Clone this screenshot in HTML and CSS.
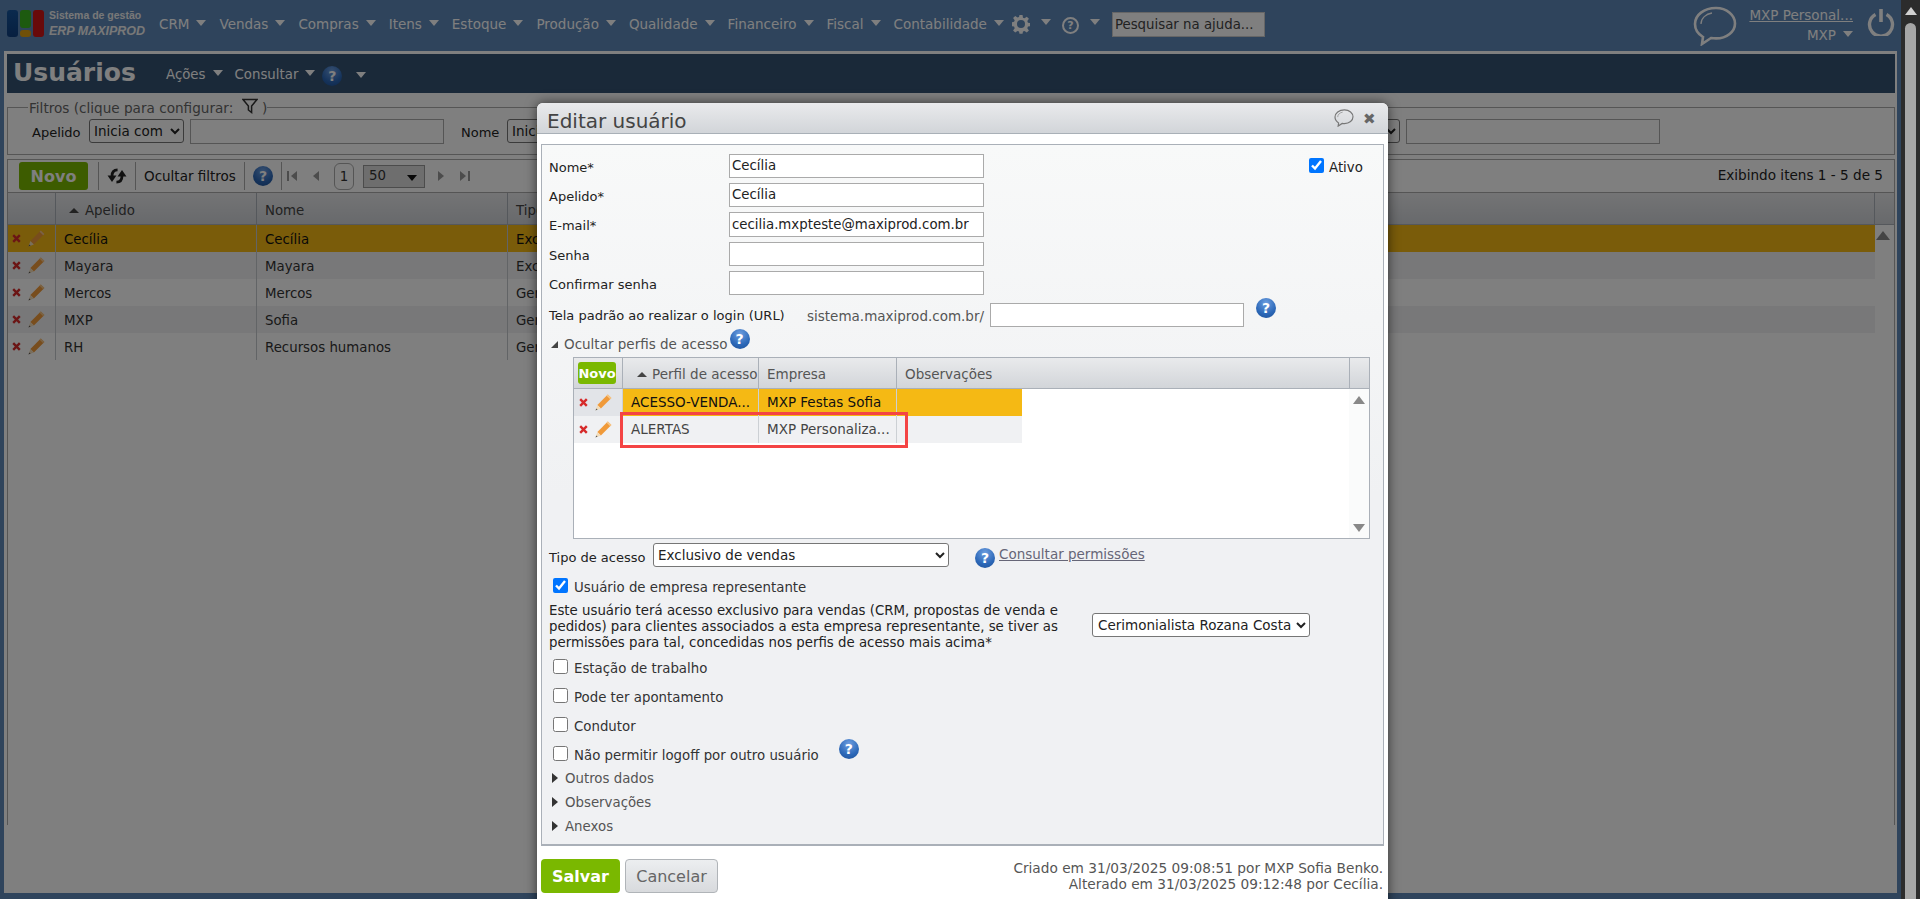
FILE: index.html
```html
<!DOCTYPE html>
<html lang="pt-BR">
<head>
<meta charset="utf-8">
<title>Usuários</title>
<link rel="stylesheet" href="styles.css">
</head>
<body>
<svg class="sprite" aria-hidden="true">
  <symbol id="i-pencil" viewBox="0 0 17 17">
    <path d="M12.8.6 16.400 4.100 5.900 14.400 2.400 10.900Z" fill="#f09a3a"/>
    <path d="M12.800.6 16.400 4.100 15.200 5.300 11.600 1.800Z" fill="#f6c88c"/>
    <path d="M2.400 10.900 5.900 14.400.5 16.500Z" fill="#f3dcb8"/>
    <path d="M1.300 14.400 2.600 15.500.5 16.500Z" fill="#555"/>
  </symbol>
  <symbol id="i-x" viewBox="0 0 9 9">
    <path d="M1.200 1.200 7.800 7.800M7.800 1.200 1.200 7.800" stroke="#d62a2a" stroke-width="2.400" fill="none"/>
  </symbol>
  <symbol id="i-bubble" viewBox="0 0 44 40">
    <path d="M23 2C11 2 2 9 2 18c0 6 3 10 8 13l-1 7 9-6c2 .3 3 .4 5 .4 11 0 19-7 19-15S34 2 23 2Z" fill="none" stroke="currentColor" stroke-width="2.600"/>
    <path d="M8 18c0-6 5-10 11-11" fill="none" stroke="currentColor" stroke-width="1.300"/>
  </symbol>
  <symbol id="i-gear" viewBox="0 0 20 20">
    <path d="M8.300 0h3.400l.5 3 1.700.7 2.500-1.800 2.400 2.400-1.800 2.500.7 1.700 2.300.5v3.400l-2.300.5-.7 1.700 1.800 2.500-2.400 2.400-2.500-1.800-1.700.7-.5 2.500H8.300l-.5-2.500-1.700-.7-2.500 1.800-2.400-2.400 1.800-2.500-.7-1.700-2.300-.5V8.100l2.300-.5.7-1.700-1.800-2.500 2.400-2.400 2.500 1.800 1.700-.7Z" transform="translate(1 1) scale(.9)" fill="#fff"/>
    <circle cx="10" cy="10" r="4" fill="#5e88b8"/>
  </symbol>
  <symbol id="i-power" viewBox="0 0 28 28">
    <path d="M8.500 6.500a11.500 11.500 0 1 0 11 0" fill="none" stroke="currentColor" stroke-width="3.400"/>
    <path d="M14 1v13" fill="none" stroke="currentColor" stroke-width="3.600"/>
  </symbol>
  <symbol id="i-funnel" viewBox="0 0 16 16">
    <path d="M1 1.500h14L9.600 8v6.500L6.400 12V8Z" fill="none" stroke="currentColor" stroke-width="1.500"/>
  </symbol>
  <symbol id="i-refresh" viewBox="0 0 18 16">
    <path d="M9.500 2.500C5.500 2.500 4.500 5 4.500 8" fill="none" stroke="currentColor" stroke-width="2.500"/>
    <path d="M.5 7.500H8.500L4.500 13.500Z" fill="currentColor"/>
    <path d="M8.500 13.500C12.500 13.500 13.500 11 13.500 8" fill="none" stroke="currentColor" stroke-width="2.500"/>
    <path d="M9.500 8.500H17.500L13.500 2.500Z" fill="currentColor"/>
  </symbol>
</svg>

<div class="app">
  <div class="page">
    <header class="topbar">
      <div class="logo">
        <div class="logo-marks">
          <span class="mark mark-blue"></span>
          <span class="mark-stack"><span class="mark mark-green"></span><span class="mark mark-orange"></span></span>
          <span class="mark mark-red"></span>
        </div>
        <div class="logo-text"><span class="logo-small">Sistema de gestão</span><span class="logo-big">ERP MAXIPROD</span></div>
      </div>
      <nav class="nav">
        <span class="nav-item">CRM<i class="caret"></i></span>
        <span class="nav-item">Vendas<i class="caret"></i></span>
        <span class="nav-item">Compras<i class="caret"></i></span>
        <span class="nav-item">Itens<i class="caret"></i></span>
        <span class="nav-item">Estoque<i class="caret"></i></span>
        <span class="nav-item">Produção<i class="caret"></i></span>
        <span class="nav-item">Qualidade<i class="caret"></i></span>
        <span class="nav-item">Financeiro<i class="caret"></i></span>
        <span class="nav-item">Fiscal<i class="caret"></i></span>
        <span class="nav-item nav-last">Contabilidade<i class="caret"></i></span>
      </nav>
      <svg class="gear"><use href="#i-gear"/></svg><i class="caret caret-gear"></i>
      <span class="help-outline">?</span><i class="caret caret-help"></i>
      <input class="search" type="text" placeholder="Pesquisar na ajuda...">
      <svg class="top-bubble"><use href="#i-bubble"/></svg>
      <div class="account">
        <a class="account-name">MXP Personal...</a>
        <span class="account-user">MXP<i class="caret caret-user"></i></span>
      </div>
      <svg class="power"><use href="#i-power"/></svg>
    </header>

    <main class="panel">
      <div class="titlebar">
        <h1 class="page-title">Usuários</h1>
        <span class="title-menu title-acoes">Ações<i class="caret"></i></span>
        <span class="title-menu title-consultar">Consultar<i class="caret"></i></span>
        <span class="help help-title">?</span><i class="caret caret-title"></i>
      </div>

      <fieldset class="filters">
        <legend class="filters-legend">Filtros (clique para configurar: <svg class="funnel"><use href="#i-funnel"/></svg> )</legend>
        <div class="filter-row">
          <label class="filter-label">Apelido</label>
          <select class="filter-select"><option>Inicia com</option></select>
          <input class="filter-input" type="text">
          <label class="filter-label filter-next">Nome</label>
          <select class="filter-select"><option>Inicia com</option></select>
          <input class="filter-input" type="text">
          <select class="filter-select filter-end"><option>Inicia com</option></select>
          <input class="filter-input" type="text">
        </div>
      </fieldset>

      <section class="listing">
        <div class="toolbar">
          <button class="btn-novo" type="button">Novo</button>
          <span class="tool tool-refresh"><svg class="refresh"><use href="#i-refresh"/></svg></span>
          <span class="tool tool-text">Ocultar filtros</span>
          <span class="tool tool-help"><span class="help">?</span></span>
          <i class="pg pg-first"></i><i class="pg pg-prev"></i>
          <span class="pg-page">1</span>
          <span class="pg-size">50<i class="caret caret-dark"></i></span>
          <i class="pg pg-next"></i><i class="pg pg-last"></i>
          <span class="tool-count">Exibindo itens 1 - 5 de 5</span>
        </div>
        <div class="grid-head">
          <span class="gh gh-actions"></span>
          <span class="gh gh-apelido"><i class="sort"></i>Apelido</span>
          <span class="gh gh-nome">Nome</span>
          <span class="gh gh-tipo">Tipo</span>
          <span class="gh gh-scroll"></span>
        </div>
        <div class="grid-body">
          <div class="grow grow-selected"><span class="gc gc-actions"><svg class="ic-x"><use href="#i-x"/></svg><svg class="ic-pencil"><use href="#i-pencil"/></svg></span><span class="gc gc-apelido">Cecília</span><span class="gc gc-nome">Cecília</span><span class="gc gc-tipo">Exclusivo</span></div>
          <div class="grow grow-alt"><span class="gc gc-actions"><svg class="ic-x"><use href="#i-x"/></svg><svg class="ic-pencil"><use href="#i-pencil"/></svg></span><span class="gc gc-apelido">Mayara</span><span class="gc gc-nome">Mayara</span><span class="gc gc-tipo">Exclusivo</span></div>
          <div class="grow"><span class="gc gc-actions"><svg class="ic-x"><use href="#i-x"/></svg><svg class="ic-pencil"><use href="#i-pencil"/></svg></span><span class="gc gc-apelido">Mercos</span><span class="gc gc-nome">Mercos</span><span class="gc gc-tipo">Geral</span></div>
          <div class="grow grow-alt"><span class="gc gc-actions"><svg class="ic-x"><use href="#i-x"/></svg><svg class="ic-pencil"><use href="#i-pencil"/></svg></span><span class="gc gc-apelido">MXP</span><span class="gc gc-nome">Sofia</span><span class="gc gc-tipo">Geral</span></div>
          <div class="grow"><span class="gc gc-actions"><svg class="ic-x"><use href="#i-x"/></svg><svg class="ic-pencil"><use href="#i-pencil"/></svg></span><span class="gc gc-apelido">RH</span><span class="gc gc-nome">Recursos humanos</span><span class="gc gc-tipo">Geral</span></div>
          <i class="scroll-up scroll-up-page"></i>
        </div>
      </section>
    </main>
    <div class="overlay"></div>
  </div>

  <aside class="scrollbar"><i class="scrollbar-arrow"></i><div class="scrollbar-thumb"></div></aside>

  <div class="modal">
    <div class="modal-head">
      <span class="modal-title">Editar usuário</span>
      <svg class="modal-bubble"><use href="#i-bubble"/></svg>
      <span class="modal-close">✖</span>
    </div>
    <form class="modal-panel">
      <div class="form-row">
        <label class="form-label">Nome*</label><input class="form-input" type="text" value="Cecília">
        <label class="check check-ativo"><input class="check-box" type="checkbox" checked>Ativo</label>
      </div>
      <div class="form-row"><label class="form-label">Apelido*</label><input class="form-input" type="text" value="Cecília"></div>
      <div class="form-row"><label class="form-label">E-mail*</label><input class="form-input form-input-tall" type="text" value="cecilia.mxpteste@maxiprod.com.br"></div>
      <div class="form-row"><label class="form-label">Senha</label><input class="form-input" type="text"></div>
      <div class="form-row"><label class="form-label">Confirmar senha</label><input class="form-input" type="text"></div>
      <div class="url-row">
        <label class="url-label">Tela padrão ao realizar o login (URL)</label>
        <span class="url-host">sistema.maxiprod.com.br/</span>
        <input class="url-input" type="text">
        <span class="help help-url">?</span>
      </div>
      <div class="section-toggle section-open"><i class="tri-open"></i><span>Ocultar perfis de acesso</span><span class="help help-toggle">?</span></div>

      <div class="subgrid">
        <div class="sg-head">
          <span class="sg-h sg-actions"><button class="btn-novo-small" type="button">Novo</button></span>
          <span class="sg-h sg-perfil"><i class="sort"></i>Perfil de acesso</span>
          <span class="sg-h sg-empresa">Empresa</span>
          <span class="sg-h sg-obs">Observações</span>
          <span class="sg-h sg-scroll"></span>
        </div>
        <div class="sg-body">
          <div class="sg-row sg-row-selected"><span class="sg-c sg-actions"><svg class="ic-x"><use href="#i-x"/></svg><svg class="ic-pencil"><use href="#i-pencil"/></svg></span><span class="sg-c sg-perfil">ACESSO-VENDA...</span><span class="sg-c sg-empresa">MXP Festas Sofia</span><span class="sg-c sg-obs-cell"></span></div>
          <div class="sg-row sg-row-alt"><span class="sg-c sg-actions"><svg class="ic-x"><use href="#i-x"/></svg><svg class="ic-pencil"><use href="#i-pencil"/></svg></span><span class="sg-c sg-perfil">ALERTAS</span><span class="sg-c sg-empresa">MXP Personaliza...</span><span class="sg-c sg-obs-cell"></span></div>
          <div class="sg-scrollcol"><i class="scroll-up"></i><i class="scroll-down"></i></div>
        </div>
        <div class="highlight"></div>
      </div>

      <div class="tipo-row">
        <label class="tipo-label">Tipo de acesso</label>
        <select class="tipo-select"><option>Exclusivo de vendas</option></select>
        <span class="help help-tipo">?</span>
        <a class="tipo-link">Consultar permissões</a>
      </div>
      <label class="check check-rep"><input class="check-box" type="checkbox" checked>Usuário de empresa representante</label>
      <div class="rep-row">
        <p class="rep-text">Este usuário terá acesso exclusivo para vendas (CRM, propostas de venda e<br>pedidos) para clientes associados a esta empresa representante, se tiver as<br>permissões para tal, concedidas nos perfis de acesso mais acima*</p>
        <select class="rep-select"><option>Cerimonialista Rozana Costa</option></select>
      </div>
      <label class="check check-opt"><input class="check-box" type="checkbox">Estação de trabalho</label>
      <label class="check check-opt"><input class="check-box" type="checkbox">Pode ter apontamento</label>
      <label class="check check-opt"><input class="check-box" type="checkbox">Condutor</label>
      <label class="check check-opt check-logoff"><input class="check-box" type="checkbox">Não permitir logoff por outro usuário<span class="help help-logoff">?</span></label>
      <div class="section-toggle section-closed section-first"><i class="tri-closed"></i><span>Outros dados</span></div>
      <div class="section-toggle section-closed"><i class="tri-closed"></i><span>Observações</span></div>
      <div class="section-toggle section-closed"><i class="tri-closed"></i><span>Anexos</span></div>
    </form>
    <div class="modal-foot">
      <button class="btn-save" type="button">Salvar</button>
      <button class="btn-cancel" type="button">Cancelar</button>
      <p class="audit">Criado em 31/03/2025 09:08:51 por MXP Sofia Benko.<br>Alterado em 31/03/2025 09:12:48 por Cecília.</p>
    </div>
  </div>
</div>
</body>
</html>
```

FILE: styles.css
```css
* { box-sizing: border-box; }
html, body { margin: 0; height: 899px; overflow: hidden; }
body { font-family: "DejaVu Sans", Verdana, sans-serif; font-size: 13.33px; color: #222; background: #fff; }
.sprite { display: none; }
.app { display: flex; height: 899px; width: 1920px; position: relative; overflow: hidden; }
.page { width: 1901px; height: 899px; background: #5e88b8; position: relative; flex: none; }
.overlay { position: absolute; inset: 0; background: rgba(0,0,0,.5); }

/* scrollbar */
.scrollbar { width: 19px; height: 899px; background: #2c2c2c; position: relative; flex: none; display: flex; flex-direction: column; align-items: center; padding-top: 7px; }
.scrollbar-arrow { width: 0; height: 0; border: 6px solid transparent; border-top: 0; border-bottom: 8px solid #d0d0d0; }
.scrollbar-thumb { width: 11px; margin-top: 8px; flex: 1; background: #a6a6a6; border-radius: 6px 6px 0 0; }

/* carets */
.caret { display: inline-block; width: 0; height: 0; border-left: 5px solid transparent; border-right: 5px solid transparent; border-top: 6px solid #fff; margin-left: 7px; vertical-align: 3px; }

/* top bar */
.topbar { height: 51px; display: flex; align-items: flex-start; padding-left: 7px; color: #fff; }
.logo { display: flex; gap: 5px; padding-top: 10px; width: 152px; flex: none; }
.logo-marks { display: flex; gap: 2px; height: 27px; }
.mark { display: block; width: 11px; border-radius: 3px; }
.mark-blue { background: linear-gradient(#14549c,#0f3f80); height: 27px; }
.mark-red { background: #d01414; height: 27px; }
.mark-stack { display: flex; flex-direction: column; gap: 2px; }
.mark-green { background: #3ab420; height: 18px; }
.mark-orange { background: #e0a010; height: 7px; }
.logo-text { display: flex; flex-direction: column; font-family: "Liberation Sans", Arial, sans-serif; font-weight: 700; color: #f0f0f0; margin-top: -2px; }
.logo-small { font-size: 10.500px; line-height: 15px; white-space: nowrap; }
.logo-big { font-size: 12.500px; line-height: 16px; font-style: italic; white-space: nowrap; }
.nav { display: flex; padding-top: 16px; flex: none; font-size: 13.500px; }
.nav-item { margin-right: 13px; white-space: nowrap; line-height: 16px; }
.nav-last { margin-right: 0; }
.gear { width: 20px; height: 20px; margin: 14px 0 0 7px; flex: none; }
.caret-gear { margin: 19px 0 0 10px; flex: none; }
.help-outline { width: 17px; height: 17px; border: 2px solid #fff; border-radius: 50%; margin: 17px 0 0 11px; font-size: 11px; line-height: 13px; text-align: center; flex: none; font-weight: 700; }
.caret-help { margin: 19px 0 0 11px; flex: none; }
.search { width: 153px; height: 25px; margin: 12px 0 0 12px; border: 1px solid #ccc; background: #fff; padding: 0 2px; font: 13.330px "DejaVu Sans", sans-serif; flex: none; }
.search::placeholder { color: #444; opacity: 1; }
.top-bubble { width: 44px; height: 40px; margin: 6px 0 0 0; margin-left: auto; color: #fff; flex: none; }
.account { width: 104px; margin-left: 12px; flex: none; display: flex; flex-direction: column; align-items: flex-end; font-size: 13.500px; }
.account-name { line-height: 16px; margin-top: 7px; text-decoration: underline; white-space: nowrap; }
.account-user { line-height: 16px; margin-top: 4px; white-space: nowrap; }
.caret-user { margin-left: 7px; }
.power { width: 28px; height: 28px; margin: 8px 6px 0 14px; color: #fff; flex: none; }

/* panel */
.panel { margin: 0 4px; width: 1893px; height: 842px; background: #fff; border: solid #fff; border-width: 3px 2px 0 3px; }
.titlebar { height: 39px; background: #345272; display: flex; align-items: flex-start; color: #fff; padding-left: 6px; }
.page-title { margin: 2px 0 0 0; font-size: 25px; line-height: 34px; font-weight: 700; width: 153px; color: #fff; }
.title-menu { margin-top: 13px; line-height: 16px; white-space: nowrap; }
.title-consultar { margin-left: 12px; }
.help-title { margin: 12px 0 0 7px; }
.caret-title { margin: 18px 0 0 14px; }

.help { display: inline-block; width: 20px; height: 20px; border-radius: 50%; background: radial-gradient(circle at 50% 25%, #6d9ee0, #2c68b8 60%, #1d4f96); color: #fff; font: 700 14px/20px "DejaVu Sans", sans-serif; text-align: center; flex: none; }

/* filters */
.filters { margin: 5px 0 0 0; padding: 0; height: 57px; border: 1px solid #aaa; min-width: 0; }
.filters-legend { margin-left: 20px; padding: 0 0 0 1px; line-height: 18px; color: #666; white-space: nowrap; font-size: 13.600px; }
.funnel { width: 16px; height: 16px; vertical-align: -1px; color: #333; margin-left: 4px; }
.filter-row { display: flex; align-items: center; height: 26px; margin-top: 1px; padding: 0 234px 0 24px; }
.filter-label { width: 57px; flex: none; padding-top: 2px; font-size: 13px; }
.filter-next { margin-left: 17px; width: 46px; }
.filter-select { width: 95px; height: 24px; flex: none; font: 13.500px "DejaVu Sans", sans-serif; background: #fff; color: #222; border: 1px solid #767676; border-radius: 3px; padding: 0; }
.filter-input { width: 254px; height: 25px; margin-left: 6px; border: 1px solid #aaa; background: #fff; flex: none; }
.filter-end { margin-left: auto; }

/* listing */
.listing { margin-top: 4px; border: 1px solid #aaa; border-bottom: 0; }
.toolbar { height: 33px; display: flex; align-items: center; position: relative; border-bottom: 1px solid #aaa; padding-left: 11px; }
.btn-novo { width: 69px; height: 28px; background: #7ab800; border: 0; border-radius: 3px; color: #fff; font: 700 16px "DejaVu Sans", sans-serif; padding: 0; flex: none; }
.tool { height: 28px; display: flex; align-items: center; border-right: 1px solid #aaa; flex: none; }
.tool-refresh { justify-content: center; border-left: 1px solid #aaa; margin-left: 10px; width: 38px; }
.refresh { width: 20px; height: 18px; color: #222; }
.tool-text { width: 109px; padding-left: 8px; white-space: nowrap; color: #222; font-size: 13.500px; }
.tool-help { width: 37px; justify-content: center; }
.pg { display: block; width: 0; height: 0; border: 5px solid transparent; flex: none; position: relative; }
.pg-first { border-left: 0; border-right: 6px solid #999; margin-left: 9px; }
.pg-first::before { content: ""; position: absolute; left: -4px; top: -5px; width: 2px; height: 10px; background: #999; }
.pg-prev { border-left: 0; border-right: 6px solid #999; margin-left: 16px; }
.pg-page { width: 20px; height: 27px; border: 1px solid #aaa; border-radius: 6px; margin-left: 15px; text-align: center; line-height: 25px; color: #333; flex: none; }
.pg-size { width: 62px; height: 23px; margin-left: 9px; background: #ddd; border: 1px solid #999; display: flex; align-items: center; justify-content: space-between; padding: 0 5px; color: #333; line-height: 16px; flex: none; }
.caret-dark { border-top-color: #111; margin: 4px 2px 0 0; }
.pg-next { border-right: 0; border-left: 6px solid #999; margin-left: 13px; }
.pg-last { border-right: 0; border-left: 6px solid #999; margin-left: 16px; }
.pg-last::before { content: ""; position: absolute; left: 2px; top: -5px; width: 2px; height: 10px; background: #999; }
.tool-count { margin-left: auto; padding-right: 11px; white-space: nowrap; color: #222; margin-top: -2px; font-size: 13.600px; }

.grid-head { height: 32px; display: flex; background: linear-gradient(#e8e9eb,#d0d3d8); border-bottom: 1px solid #aab0b8; color: #444; line-height: 36px; }
.gh { flex: none; border-right: 1px solid #aab0b8; }
.gh-actions { width: 48px; }
.gh-apelido { width: 201px; padding-left: 13px; }
.gh-nome { width: 251px; padding-left: 8px; }
.gh-tipo { width: 1367px; padding-left: 8px; }
.gh-scroll { border-right: 0; width: 20px; }
.sort { display: inline-block; width: 0; height: 0; border: 5px solid transparent; border-top: 0; border-bottom: 5px solid #444; margin-right: 6px; vertical-align: 2px; }

.grid-body { position: relative; height: 600px; background: #fff; }
.grow { height: 27px; width: 1867px; display: flex; background: #fff; color: #333; line-height: 30px; }
.grow-alt { background: #f0f1f3; }
.grow-selected { background: #f5b914; color: #111; }
.gc { flex: none; border-right: 1px solid #c4c8cd; height: 100%; white-space: nowrap; overflow: hidden; }
.gc-actions { width: 48px; display: flex; align-items: center; padding-left: 4px; }
.gc-apelido { width: 201px; padding-left: 8px; }
.gc-nome { width: 251px; padding-left: 8px; }
.gc-tipo { flex: 1; padding-left: 8px; border-right: 0; }
.ic-x { width: 9px; height: 9px; flex: none; }
.ic-pencil { width: 17px; height: 17px; margin-left: 7px; flex: none; }
.scroll-up { display: block; width: 0; height: 0; border: 6px solid transparent; border-top: 0; border-bottom: 8px solid #888; }
.scroll-down { display: block; width: 0; height: 0; border: 6px solid transparent; border-bottom: 0; border-top: 8px solid #888; }
.scroll-up-page { position: absolute; right: 4px; top: 6px; border-width: 0 7px 9px; }

/* modal */
.modal { position: absolute; left: 537px; top: 103px; width: 851px; height: 810px; background: #fff; border-radius: 6px 6px 0 0; box-shadow: 0 0 12px rgba(0,0,0,.6); }
.modal-head { height: 31px; background: linear-gradient(#e9eaec,#d2d5d9); border-bottom: 1px solid #a9b0b7; border-radius: 6px 6px 0 0; display: flex; align-items: center; padding-left: 10px; }
.modal-title { font-size: 20px; color: #444; line-height: 26px; flex: 1; padding-top: 6px; }
.modal-bubble { width: 20px; height: 18px; color: #777; margin-right: 9px; }
.modal-close { color: #666; font-size: 15px; width: 25px; font-weight: 700; padding-top: 1px; }
.modal-panel { margin: 10px 4px 0 4px; height: 702px; border: 1px solid #aab0b8; border-bottom-width: 2px; background: linear-gradient(#f8f9f9,#f0f1f3 50%); padding: 9px 0 0 7px; color: #333; }
.form-row { display: flex; align-items: center; margin-bottom: 5px; }
.form-label { width: 180px; flex: none; padding-top: 2px; color: #222; font-size: 13px; }
.form-input { width: 255px; height: 24px; border: 1px solid #aaa; background: #fff; padding: 0 2px 1px; font: 13.330px "DejaVu Sans", sans-serif; color: #222; flex: none; }
.form-input-tall { height: 25px; }
.check { display: flex; align-items: flex-start; color: #333; line-height: 20px; }
.check-box { width: 15px; height: 15px; margin: 0 6px 0 0; accent-color: #0075ff; flex: none; }
.check-ativo { margin: 4px 0 0 325px; color: #222; align-self: flex-start; }
.check-ativo .check-box { margin-right: 5px; margin-top: 0; }
.url-row { display: flex; align-items: flex-start; height: 32px; margin-top: 2px; padding-top: 3px; }
.url-label { width: 258px; line-height: 16px; padding-top: 5px; white-space: nowrap; color: #222; flex: none; font-size: 13px; }
.url-host { width: 183px; color: #555; line-height: 16px; padding-top: 5px; white-space: nowrap; flex: none; font-size: 13.500px; }
.url-input { width: 254px; height: 24px; border: 1px solid #aaa; background: #fff; flex: none; }
.help-url { margin: -5px 0 0 12px; }
.section-toggle { display: flex; align-items: center; line-height: 16px; color: #555; }
.section-open { height: 24px; padding-left: 2px; font-size: 13.500px; }
.tri-open { width: 0; height: 0; border-style: solid; border-width: 0 0 7px 7px; border-color: transparent transparent #444 transparent; margin-right: 6px; flex: none; }
.help-toggle { margin: -10px 0 0 2px; }
.tri-closed { width: 0; height: 0; border-style: solid; border-width: 5px 0 5px 6px; border-color: transparent transparent transparent #333; margin-right: 7px; flex: none; margin-top: -3px; }
.section-closed { height: 24px; padding-left: 3px; }
.section-first { margin-top: 0; }

/* subgrid */
.subgrid { position: relative; margin: 1px 0 0 24px; width: 797px; height: 182px; border: 1px solid #aab0b8; background: #fff; font-size: 13.500px; }
.sg-head { height: 31px; display: flex; background: linear-gradient(#e9eaec,#d2d5d9); border-bottom: 1px solid #aab0b8; line-height: 32px; color: #555; }
.sg-h { flex: none; border-right: 1px solid #aab0b8; white-space: nowrap; overflow: hidden; }
.sg-actions { width: 49px; }
.sg-head .sg-actions { display: flex; align-items: center; padding-left: 4px; }
.btn-novo-small { width: 38px; height: 22px; background: #7ab800; border: 0; border-radius: 3px; color: #fff; font: 700 13px "DejaVu Sans", sans-serif; padding: 0; }
.sg-perfil { width: 136px; }
.sg-head .sg-perfil { padding-left: 14px; }
.sg-head .sort { margin-right: 5px; }
.sg-empresa { width: 138px; padding-left: 8px; }
.sg-obs { width: 453px; padding-left: 8px; }
.sg-scroll { width: 20px; border-right: 0; }
.sg-body { position: relative; height: 149px; }
.sg-row { display: flex; width: 448px; height: 27px; line-height: 27px; color: #444; }
.sg-row-selected { background: #f5b914; color: #111; }
.sg-row-alt { background: #f0f1f3; }
.sg-c { flex: none; white-space: nowrap; overflow: hidden; border-right: 1px solid #ccd0d4; height: 100%; }
.sg-row .sg-actions { display: flex; align-items: center; padding-left: 5px; background: #e2e4e8; }
.sg-row-alt .sg-actions { background: transparent; }
.sg-row .sg-perfil { padding-left: 8px; }
.sg-obs-cell { border-right: 0; width: 125px; }
.sg-scrollcol { position: absolute; right: 0; top: 0; bottom: 0; width: 20px; background: #fafbfb; display: flex; flex-direction: column; justify-content: space-between; align-items: center; padding: 7px 0 6px; }
.highlight { position: absolute; left: 46px; top: 54px; width: 288px; height: 36px; border: 3px solid #f44444; }

/* tipo row */
.tipo-row { display: flex; align-items: flex-start; margin-top: 4px; height: 34px; }
.tipo-label { width: 104px; line-height: 16px; padding-top: 7px; color: #222; flex: none; font-size: 13px; }
.tipo-select { width: 296px; height: 24px; font: 13.500px "DejaVu Sans", sans-serif; color: #222; background: #fff; border: 1px solid #767676; border-radius: 3px; flex: none; }
.help-tipo { margin: 5px 0 0 26px; }
.tipo-link { margin: 3px 0 0 4px; text-decoration: underline; color: #667; white-space: nowrap; line-height: 16px; font-size: 13.500px; }
.check-rep { margin: 1px 0 0 4px; height: 25px; }
.rep-row { display: flex; align-items: flex-start; height: 56px; }
.rep-text { width: 543px; margin: 0; line-height: 16px; color: #222; white-space: nowrap; flex: none; }
.rep-select { width: 218px; height: 24px; margin-top: 10px; font: 13.500px "DejaVu Sans", sans-serif; color: #222; background: #fff; border: 1px solid #767676; border-radius: 3px; padding: 0 0 0 1px; flex: none; }
.check-opt { margin-left: 4px; height: 29px; }
.check-logoff { height: 21px; }
.help-logoff { margin: -7px 0 0 20px; }

/* footer */
.modal-foot { display: flex; align-items: flex-start; margin: 13px 4px 0 4px; }
.btn-save { width: 79px; height: 34px; background: #7ab800; border: 0; border-radius: 4px; color: #fff; font: 700 16px "DejaVu Sans", sans-serif; padding: 1px 0 0; flex: none; }
.btn-cancel { width: 93px; height: 34px; margin-left: 5px; background: linear-gradient(#eceef0,#d8dadd); border: 1px solid #b0b4b8; border-radius: 4px; color: #666; font: 16px "DejaVu Sans", sans-serif; padding: 1px 0 0; flex: none; }
.audit { margin: 1px 1px 0 auto; text-align: right; line-height: 16px; color: #555; white-space: nowrap; font-size: 13.700px; }
```
